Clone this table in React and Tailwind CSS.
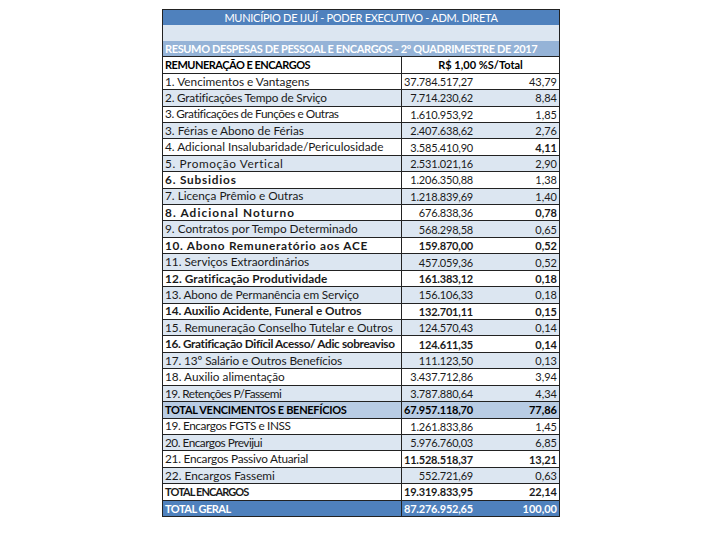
import React from "react";

const rows = [
  { l: "1. Vencimentos e Vantagens", v: "37.784.517,27", p: "43,79", bg: "w", t: 0 },
  { l: "2. Gratificações Tempo de Srviço", v: "7.714.230,62", p: "8,84", bg: "b", t: -0.2 },
  { l: "3. Gratificações de Funções e Outras", v: "1.610.953,92", p: "1,85", bg: "w", t: -0.45 },
  { l: "3. Férias e Abono de Férias", v: "2.407.638,62", p: "2,76", bg: "b", t: 0 },
  { l: "4. Adicional Insalubaridade/Periculosidade", v: "3.585.410,90", p: "4,11", bg: "w", pb: true, t: 0 },
  { l: "5. Promoção Vertical", v: "2.531.021,16", p: "2,90", bg: "b", t: 0.6 },
  { l: "6. Subsidios", v: "1.206.350,88", p: "1,38", bg: "w", lb: "l", t: 0.8 },
  { l: "7. Licença Prêmio e Outras", v: "1.218.839,69", p: "1,40", bg: "b", t: 0 },
  { l: "8. Adicional Noturno", v: "676.838,36", p: "0,78", bg: "w", lb: "l", pb: true, t: 1.1 },
  { l: "9. Contratos por Tempo Determinado", v: "568.298,58", p: "0,65", bg: "b", t: 0 },
  { l: "10. Abono Remuneratório aos ACE", v: "159.870,00", p: "0,52", bg: "w", lb: "l", vb: true, pb: true, t: 0.7 },
  { l: "11. Serviços Extraordinários", v: "457.059,36", p: "0,52", bg: "b", t: 0 },
  { l: "12. Gratificação Produtividade", v: "161.383,12", p: "0,18", bg: "w", lb: "l", vb: true, pb: true, t: 0.1 },
  { l: "13. Abono de Permanência em Serviço", v: "156.106,33", p: "0,18", bg: "b", t: -0.15 },
  { l: "14. Auxilio Acidente, Funeral e Outros", v: "132.701,11", p: "0,15", bg: "w", lb: "l", vb: true, pb: true, t: -0.05 },
  { l: "15. Remuneração Conselho Tutelar e Outros", v: "124.570,43", p: "0,14", bg: "b", t: 0 },
  { l: "16. Gratificação Difícil Acesso/ Adic sobreaviso", v: "124.611,35", p: "0,14", bg: "w", lb: "l", vb: true, pb: true, t: -0.35 },
  { l: "17. 13º Salário e Outros Benefícios", v: "111.123,50", p: "0,13", bg: "b", t: -0.1 },
  { l: "18. Auxilio alimentação", v: "3.437.712,86", p: "3,94", bg: "w", t: 0 },
  { l: "19. Retenções P/Fassemi", v: "3.787.880,64", p: "4,34", bg: "b", t: -0.55 },
  { l: "TOTAL VENCIMENTOS E BENEFÍCIOS", v: "67.957.118,70", p: "77,86", bg: "t", lb: "c", vb: true, pb: true, t: -0.3 },
  { l: "19. Encargos FGTS e INSS", v: "1.261.833,86", p: "1,45", bg: "w", t: -0.4 },
  { l: "20. Encargos Previjui", v: "5.976.760,03", p: "6,85", bg: "b", t: -0.5 },
  { l: "21. Encargos Passivo Atuarial", v: "11.528.518,37", p: "13,21", bg: "w", vb: true, pb: true, t: -0.25 },
  { l: "22. Encargos Fassemi", v: "552.721,69", p: "0,63", bg: "b", t: 0 },
  { l: "TOTAL ENCARGOS", v: "19.319.833,95", p: "22,14", bg: "w", lb: "c", vb: true, pb: true, t: -0.9 },
  { l: "TOTAL GERAL", v: "87.276.952,65", p: "100,00", bg: "g", lb: "c", vb: true, pb: true, t: -0.5 },
];

const bgClass = {
  w: "bg-white text-[#1a1a1a]",
  b: "bg-[#dce6f1] text-[#1a1a1a]",
  t: "bg-[#b8cce4] text-black",
  g: "bg-[#4f81bd] text-white",
};

const labelClass = {
  n: "text-[11.8px] font-normal",
  l: "text-[11.8px] font-bold",
  c: "text-[11px] font-bold",
};

export default function App() {
  return (
    <div
      className="w-[720px] h-[540px] bg-white pl-[162px] pt-[9px]"
      style={{ fontFamily: "Lato, 'Open Sans', sans-serif" }}
    >
      <div className="w-[398px] h-[508px] flex flex-col border border-[#222] text-[11px] leading-none">
        <div className="flex-1 flex items-center justify-center bg-[#4f81bd] text-white tracking-[-0.28px] whitespace-nowrap">
          MUNICÍPIO DE IJUÍ - PODER EXECUTIVO - ADM. DIRETA
        </div>
        <div className="flex-1 bg-[#dce6f1]" />
        <div className="flex-1 flex items-center bg-[#95b3d7] text-white font-bold tracking-[-0.37px] whitespace-nowrap pl-[2px] border-b border-[#222]">
          RESUMO DESPESAS DE PESSOAL E ENCARGOS - 2º QUADRIMESTRE DE 2017
        </div>
        <div className="flex-1 flex bg-white border-b border-[#222] font-bold text-black">
          <div className="w-[239px] flex items-center pl-[2px] border-r border-[#222] tracking-[-0.5px]">
            REMUNERAÇÃO E ENCARGOS
          </div>
          <div className="flex-1 flex items-center justify-center">R$ 1,00 %S/Total</div>
        </div>
        {rows.map((r, i) => (
          <div
            key={i}
            className={`flex-1 flex ${bgClass[r.bg]} ${i < rows.length - 1 ? "border-b border-[#222]" : ""}`}
          >
            <div
              className={`w-[239px] flex items-center pl-[2px] border-r border-[#222] whitespace-nowrap overflow-hidden ${labelClass[r.lb || "n"]}`}
              style={{ letterSpacing: `${r.t}px` }}
            >
              {r.l}
            </div>
            <div className={`w-[71px] flex items-center justify-end tracking-[-0.2px] ${r.vb ? "font-bold" : ""}`}>
              {r.v}
            </div>
            <div className={`flex-1 flex items-center justify-end pr-[2px] ${r.pb ? "font-bold" : ""}`}>
              {r.p}
            </div>
          </div>
        ))}
      </div>
    </div>
  );
}
